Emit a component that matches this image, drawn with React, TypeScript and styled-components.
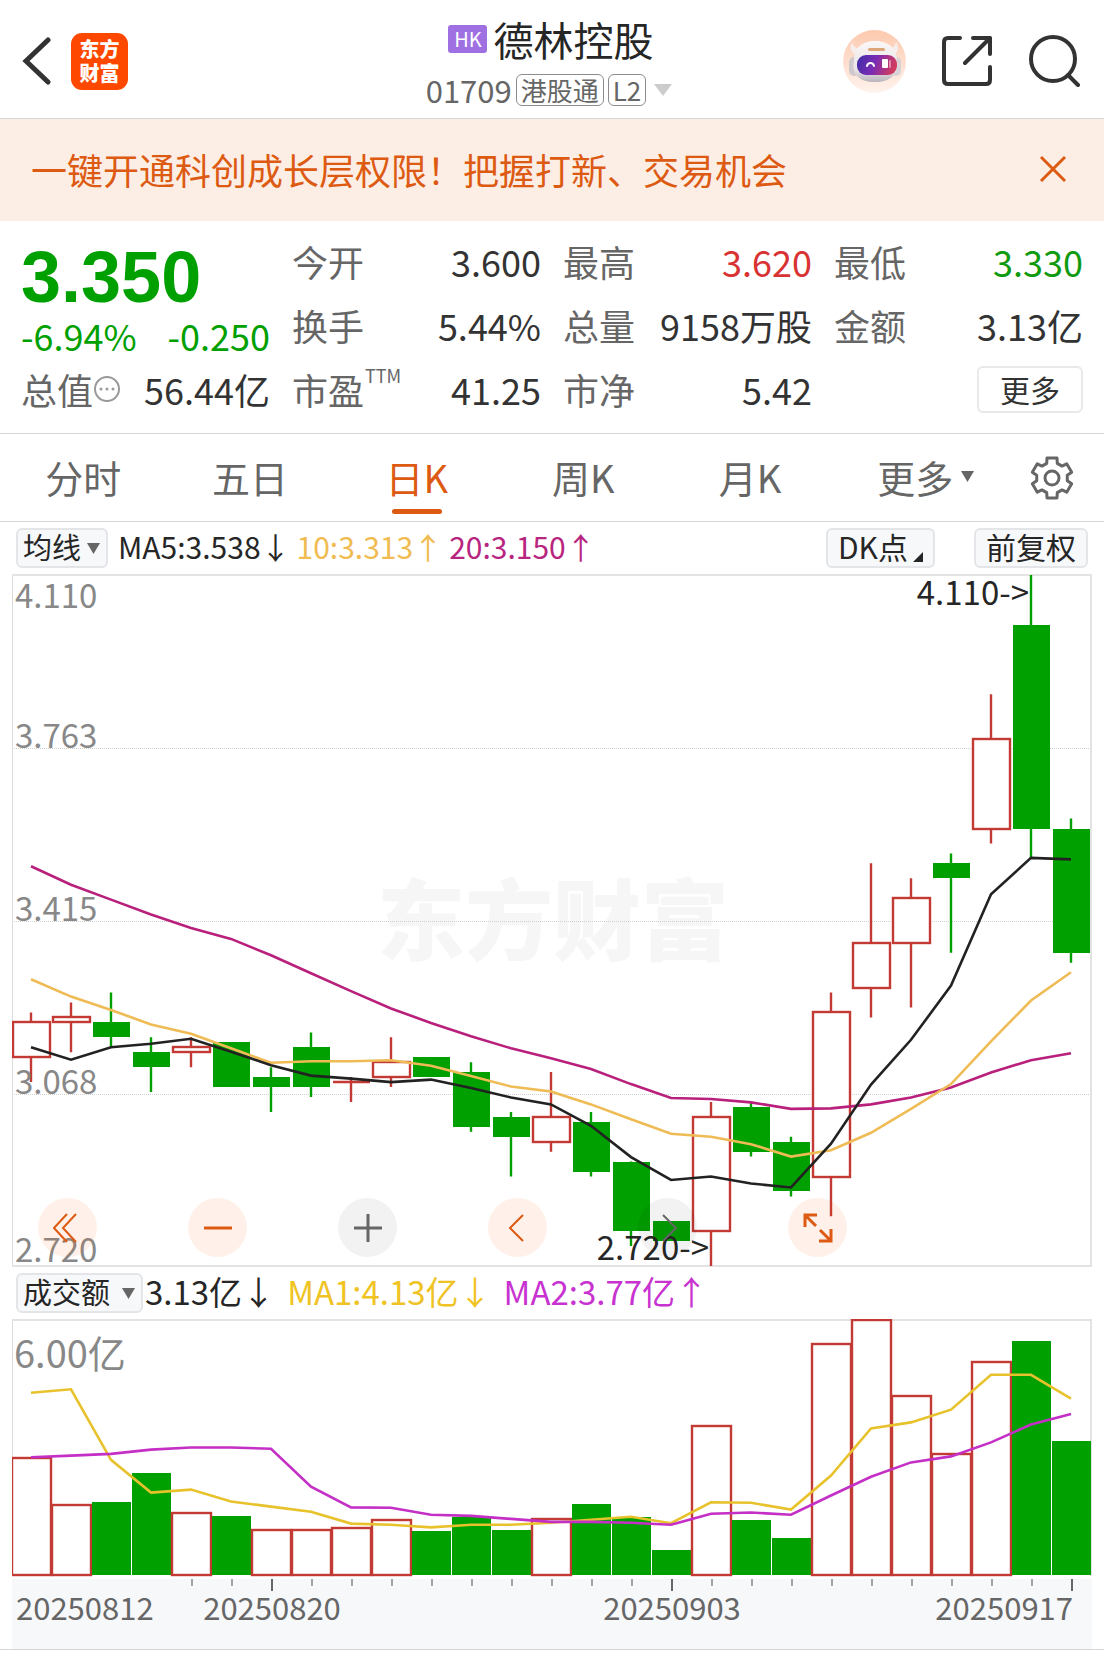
import React from "react";
import styled, { createGlobalStyle } from "styled-components";

const UP = "#c33a35";
const DOWN = "#00a000";
const ORANGE = "#dd5a12";
const INK = "#262626";

const GlobalStyle = createGlobalStyle`
  * { box-sizing: border-box; }
  body {
    margin: 0;
    background: #fff;
    color: ${INK};
    font-family: "Noto Sans CJK SC", "Noto Sans", sans-serif;
  }
  button, select {
    font-family: inherit;
    color: inherit;
    margin: 0;
    padding: 0;
    border: 0;
    background: none;
    cursor: pointer;
  }
  svg { display: block; }
  svg text { font-family: "Noto Sans CJK SC", "Noto Sans", sans-serif; }
`;

/* ---------- header ---------- */

const Header = styled.header`
  display: grid;
  grid-template-columns: 1fr auto 1fr;
  align-items: center;
  height: 119px;
  padding: 4px 24px 0 22px;
  border-bottom: 1px solid #d6d6d6;
`;

const HeaderSide = styled.div<{ $end?: boolean }>`
  display: flex;
  align-items: center;
  justify-content: ${(p) => (p.$end ? "flex-end" : "flex-start")};
  gap: ${(p) => (p.$end ? 36 : 20)}px;
`;

const Logo = styled.a`
  display: grid;
  place-content: center;
  width: 57px;
  height: 57px;
  border-radius: 11px;
  background: #fe4800;
  color: #fff;
  font-size: 20px;
  line-height: 24px;
  font-weight: 900;
  text-decoration: none;
`;

const Title = styled.div`
  display: flex;
  flex-direction: column;
  align-items: center;
  gap: 12px;
`;

const Name = styled.h1`
  display: flex;
  align-items: center;
  gap: 6px;
  margin: 0;
  font-size: 40px;
  line-height: 46px;
  font-weight: 400;
`;

const Market = styled.span`
  width: 39px;
  border-radius: 3px;
  background: #9e70e2;
  color: #fff;
  font-size: 20px;
  line-height: 28px;
  text-align: center;
`;

const Code = styled.div`
  display: flex;
  align-items: center;
  gap: 4px;
  color: #666;
  font-size: 31px;
  line-height: 32px;
`;

const Tag = styled.span`
  padding: 0 4px;
  border: 1px solid #8c8c8c;
  border-radius: 6px;
  font-size: 26px;
  line-height: 30px;
`;

const TitleMenu = styled.button`
  padding: 8px 4px;
`;

/* ---------- banner ---------- */

const Banner = styled.aside`
  display: flex;
  align-items: center;
  justify-content: space-between;
  height: 102px;
  padding: 0 36px 2px 31px;
  background: #fceee5;
  color: ${ORANGE};
  font-size: 36px;
`;

/* ---------- quote ---------- */

const Quote = styled.section`
  display: grid;
  grid-template-columns: repeat(4, 1fr);
  grid-template-rows: repeat(3, 64px);
  column-gap: 22px;
  padding: 8px 21px 12px;
  border-bottom: 1px solid #d6d6d6;
  font-size: 36px;
`;

const Last = styled.div`
  grid-row: span 2;
  color: ${DOWN};
`;

const Price = styled.div`
  padding-top: 12px;
  font-family: "Liberation Sans", "Noto Sans CJK SC", sans-serif;
  font-size: 72px;
  line-height: 72px;
  font-weight: 700;
`;

const Change = styled.div`
  display: flex;
  justify-content: space-between;
  line-height: 44px;
`;

const Stat = styled.div<{ $tone?: string }>`
  display: flex;
  align-items: center;
  justify-content: space-between;
  line-height: 64px;
  white-space: nowrap;
  color: ${(p) => p.$tone || "#333"};
`;

const StatLabel = styled.span`
  display: flex;
  align-items: center;
  gap: 1px;
  color: #666;
`;

const Ttm = styled.small`
  align-self: flex-start;
  font-size: 18px;
  line-height: 36px;
`;

const MoreButton = styled.button`
  width: 106px;
  height: 47px;
  margin-left: auto;
  border: 2px solid #e9e9eb;
  border-radius: 6px;
  font-size: 30px;
  line-height: 40px;
`;

/* ---------- tabs ---------- */

const Tabs = styled.nav`
  display: flex;
  height: 88px;
  border-bottom: 1px solid #d6d6d6;
`;

const TabList = styled.div`
  display: grid;
  grid-template-columns: repeat(6, 1fr);
  flex: 1;
`;

const Tab = styled.button<{ $active?: boolean; $menu?: boolean }>`
  position: relative;
  display: flex;
  align-items: center;
  justify-content: center;
  gap: 8px;
  padding: 0 0 3px ${(p) => (p.$menu ? 18 : 0)}px;
  color: ${(p) => (p.$active ? ORANGE : "#666")};
  font-size: 38px;

  &::after {
    content: "";
    display: ${(p) => (p.$active ? "block" : "none")};
    position: absolute;
    bottom: 7px;
    left: calc(50% - 25px);
    width: 50px;
    height: 5px;
    border-radius: 3px;
    background: ${ORANGE};
  }
`;

const SettingsButton = styled.button`
  display: grid;
  place-items: center;
  width: 104px;
`;

/* ---------- chart toolbars ---------- */

const Toolbar = styled.div`
  display: flex;
  align-items: center;
  justify-content: space-between;
  height: 52px;
  padding: 0 16px;
`;

const Legend = styled.div<{ $large?: boolean }>`
  display: flex;
  align-items: center;
  gap: ${(p) => (p.$large ? 12 : 6)}px;
  font-size: ${(p) => (p.$large ? 33 : 30)}px;
  white-space: nowrap;
`;

const LegendItem = styled.span<{ $color: string }>`
  padding-bottom: 4px;
  color: ${(p) => p.$color};
`;

const Picker = styled.label<{ $width: number; $gap: number }>`
  display: grid;
  align-items: center;
  width: ${(p) => p.$width}px;
  height: 40px;
  margin-right: ${(p) => p.$gap}px;
  border: 2px solid #e4e5e8;
  border-radius: 6px;
  background: #f7f8fa;

  select, svg { grid-area: 1 / 1; }
  select {
    height: 36px;
    padding: 0 0 4px 5px;
    appearance: none;
    font-size: 29px;
    line-height: 32px;
  }
  svg {
    justify-self: end;
    margin-right: 6px;
    pointer-events: none;
  }
`;

const ToolGroup = styled.div`
  display: flex;
  gap: 39px;
`;

const ToolButton = styled.button`
  display: flex;
  align-items: flex-start;
  gap: 5px;
  height: 40px;
  padding: 0 10px;
  border: 2px solid #e4e5e8;
  border-radius: 6px;
  background: #f7f8fa;
  font-size: 30px;
  line-height: 32px;

  svg {
    align-self: flex-end;
    margin-bottom: 4px;
  }
`;

/* ---------- charts ---------- */

const ChartBox = styled.div`
  position: relative;
  margin: 0 12px;

  > svg { width: 100%; height: auto; }
`;

const ChartControls = styled.div`
  position: absolute;
  left: 26px;
  bottom: 10px;
  display: flex;
  gap: 91px;
`;

const RoundButton = styled.button<{ $muted?: boolean }>`
  display: grid;
  place-items: center;
  width: 59px;
  height: 59px;
  border-radius: 50%;
  background: ${(p) => (p.$muted ? "rgba(0, 0, 0, 0.05)" : "rgba(255, 100, 10, 0.09)")};
  color: ${(p) => (p.$muted ? "#666" : ORANGE)};
`;

const BottomRule = styled.hr`
  margin: 0;
  border: 0;
  border-top: 1px solid #d6d6d6;
`;

/* ---------- data ---------- */

// [open, close, high, low]
const candles: number[][] = [
  [3.14, 3.21, 3.23, 3.09], [3.21, 3.22, 3.25, 3.15], [3.21, 3.18, 3.27, 3.16],
  [3.15, 3.12, 3.18, 3.07], [3.15, 3.16, 3.18, 3.12], [3.17, 3.08, 3.17, 3.08],
  [3.1, 3.08, 3.12, 3.03], [3.16, 3.08, 3.19, 3.06], [3.09, 3.09, 3.1, 3.05],
  [3.1, 3.13, 3.18, 3.08], [3.14, 3.1, 3.14, 3.1], [3.11, 3.0, 3.13, 2.99],
  [3.02, 2.98, 3.03, 2.9], [2.97, 3.02, 3.11, 2.95], [3.01, 2.91, 3.03, 2.9],
  [2.93, 2.79, 2.93, 2.76], [2.81, 2.77, 2.81, 2.77], [2.79, 3.02, 3.05, 2.72],
  [3.04, 2.95, 3.05, 2.94], [2.97, 2.87, 2.98, 2.86], [2.9, 3.23, 3.27, 2.82],
  [3.28, 3.37, 3.53, 3.22], [3.37, 3.46, 3.5, 3.24], [3.53, 3.5, 3.55, 3.35],
  [3.6, 3.78, 3.87, 3.57], [4.01, 3.6, 4.11, 3.54], [3.6, 3.35, 3.62, 3.33],
];

const ma5 = [3.16, 3.135, 3.16, 3.167, 3.177, 3.151, 3.124, 3.103, 3.097, 3.09, 3.095, 3.078, 3.059, 3.045, 3.002, 2.939, 2.893, 2.9, 2.886, 2.878, 2.966, 3.085, 3.175, 3.284, 3.468, 3.541, 3.538];
const ma10 = [3.297, 3.262, 3.235, 3.206, 3.187, 3.158, 3.129, 3.132, 3.132, 3.134, 3.123, 3.102, 3.081, 3.071, 3.045, 3.015, 2.986, 2.98, 2.965, 2.94, 2.953, 2.988, 3.036, 3.086, 3.172, 3.254, 3.311];
const ma20 = [3.524, 3.487, 3.457, 3.427, 3.4, 3.378, 3.345, 3.309, 3.273, 3.238, 3.209, 3.182, 3.158, 3.138, 3.116, 3.086, 3.058, 3.056, 3.049, 3.036, 3.037, 3.045, 3.059, 3.079, 3.109, 3.134, 3.148];

const volumes = [2.76, 1.65, 1.72, 2.41, 1.47, 1.4, 1.07, 1.05, 1.11, 1.3, 1.04, 1.37, 1.07, 1.32, 1.68, 1.37, 0.6, 3.51, 1.3, 0.88, 5.44, 6, 4.22, 2.85, 5.02, 5.51, 3.16];
const volumeUp = [0, 1, 4, 6, 7, 8, 9, 13, 17, 20, 21, 22, 23, 24];
const vma1 = [4.29, 4.37, 2.71, 1.94, 2.01, 1.73, 1.61, 1.49, 1.21, 1.18, 1.12, 1.18, 1.18, 1.23, 1.3, 1.37, 1.22, 1.71, 1.7, 1.54, 2.34, 3.45, 3.59, 3.89, 4.71, 4.71, 4.15];
const vma2 = [2.77, 2.81, 2.85, 2.95, 3, 3, 2.97, 2.08, 1.59, 1.58, 1.42, 1.39, 1.32, 1.25, 1.25, 1.23, 1.18, 1.44, 1.47, 1.42, 1.87, 2.31, 2.65, 2.79, 3.12, 3.54, 3.79];

const STEP = 40;
const cx = (i: number) => 19 + i * STEP;
const priceY = (p: number) => 1 + ((4.11 - p) / 1.39) * 691;
const volumeY = (v: number) => 256 - (v / 6) * 255;
const line = (values: number[], y: (v: number) => number) =>
  values.map((v, i) => `${cx(i)},${y(v).toFixed(1)}`).join(" ");

/* ---------- drawings ---------- */

const Triangle = ({ w, h, color }: { w: number; h: number; color: string }) => (
  <svg width={w} height={h} viewBox="0 0 10 10" preserveAspectRatio="none" aria-hidden="true">
    <path d="M0 0H10L5 10Z" fill={color} />
  </svg>
);

const Robot = () => (
  <svg width="63" height="63" viewBox="0 0 63 63" aria-hidden="true">
    <defs>
      <linearGradient id="halo" x1="0" y1="0" x2="0" y2="1">
        <stop offset="0" stopColor="#fdc9ae" />
        <stop offset="1" stopColor="#fff3ed" />
      </linearGradient>
      <linearGradient id="shell" x1="0" y1="0" x2="0" y2="1">
        <stop offset="0" stopColor="#fbf7f6" />
        <stop offset="0.7" stopColor="#e9e4e6" />
        <stop offset="1" stopColor="#b9b3bb" />
      </linearGradient>
      <linearGradient id="visor" x1="0" y1="0" x2="1" y2="0.2">
        <stop offset="0" stopColor="#3c2fa6" />
        <stop offset="0.5" stopColor="#7a2bb4" />
        <stop offset="1" stopColor="#cf3a60" />
      </linearGradient>
    </defs>
    <circle cx="31.5" cy="31.5" r="31.5" fill="url(#halo)" />
    <path d="M9 12C6 18 8 24 15 25L19 18C14 19 10 17 9 12Z" fill="#f6eeec" />
    <path d="M53 12C57 18 55 24 48 25L44 18C49 19 52 17 53 12Z" fill="#f6eeec" />
    <rect x="6" y="27" width="10" height="19" rx="5" fill="#cfc8cd" />
    <rect x="48" y="27" width="10" height="19" rx="5" fill="#d8d1d5" />
    <path d="M11 31C11 17 20 11 32 11S54 17 54 31C56 45 47 52 32 52S8 45 11 31Z" fill="url(#shell)" />
    <rect x="25" y="18" width="17" height="3" rx="1.5" fill="#dda578" />
    <rect x="14" y="25" width="40" height="20" rx="9" fill="url(#visor)" />
    <path d="M24 36C25 32 30 32 31 36" stroke="#fff" strokeWidth="2" fill="none" strokeLinecap="round" />
    <rect x="39" y="29" width="6" height="9" rx="1" fill="#fff" />
    <rect x="46" y="30" width="2" height="8" rx="1" fill="#e58aa5" />
  </svg>
);

const gearPath = (() => {
  const pts: string[] = [];
  for (let k = 0; k < 6; k++) {
    [[15.5, -20], [20.5, -14], [20.5, 14], [15.5, 20]].forEach(([r, d]) => {
      const a = ((k * 60 + d - 90) * Math.PI) / 180;
      pts.push(`${(22 + r * Math.cos(a)).toFixed(1)} ${(22 + r * Math.sin(a)).toFixed(1)}`);
    });
  }
  return `M${pts.join("L")}Z`;
})();

const Gear = () => (
  <svg width="44" height="44" viewBox="0 0 44 44" fill="none" stroke="#666" strokeWidth="3" strokeLinejoin="round" aria-hidden="true">
    <path d={gearPath} />
    <circle cx="22" cy="22" r="7" />
  </svg>
);

const Stroke = ({ d, size = 30, w = 2 }: { d: string; size?: number; w?: number }) => (
  <svg width={size} height={size} viewBox="0 0 30 30" fill="none" stroke="currentColor" strokeWidth={w} aria-hidden="true">
    <path d={d} />
  </svg>
);

const PriceChart = () => (
  <svg viewBox="0 0 1080 693" role="img" aria-label="日K线图">
    <text x="541" y="379" fontSize="88" fontWeight="900" fill="#f6f6f6" textAnchor="middle">东方财富</text>
    {[174, 347, 520].map((y) => (
      <line key={y} x1="0" x2="1079" y1={y} y2={y} stroke="#d0d0d0" strokeDasharray="1 1" shapeRendering="crispEdges" />
    ))}
    <path d="M0.5 0V692" stroke="#dcdcdc" />
    <path d="M0 1H1079V692H0" stroke="#e3e3e3" strokeWidth="2" fill="none" />
    {candles.map(([open, close, high, low], i) => {
      const up = close >= open;
      const top = Math.round(priceY(Math.max(open, close)));
      const bottom = Math.round(priceY(Math.min(open, close)));
      const color = up ? UP : DOWN;
      return (
        <g key={i} stroke={color} strokeWidth="2.4">
          <path d={`M${cx(i)} ${priceY(high).toFixed(1)}V${top}M${cx(i)} ${bottom}V${priceY(low).toFixed(1)}`} />
          {open === close ? (
            <path d={`M${cx(i) - 18} ${top}H${cx(i) + 19}`} />
          ) : up ? (
            <rect x={cx(i) - 18} y={top} width="37" height={bottom - top} fill="#fff" />
          ) : (
            <rect x={cx(i) - 18} y={top} width="37" height={bottom - top} fill={color} stroke="none" />
          )}
        </g>
      );
    })}
    <g fill="none" strokeWidth="2.6">
      <polyline points={line(ma20, priceY)} stroke="#b8207c" />
      <polyline points={line(ma10, priceY)} stroke="#efbb55" />
      <polyline points={line(ma5, priceY)} stroke="#222" />
    </g>
    <g fontSize="33" fill="#888">
      <text x="3" y="34">4.110</text>
      <text x="3" y="174">3.763</text>
      <text x="3" y="347">3.415</text>
      <text x="3" y="520">3.068</text>
      <text x="3" y="688">2.720</text>
    </g>
    <g fontSize="33" fill={INK} textAnchor="end">
      <text x="1017" y="31">4.110-&gt;</text>
      <text x="697" y="686">2.720-&gt;</text>
    </g>
  </svg>
);

const VolumeChart = () => (
  <svg viewBox="0 0 1080 330" role="img" aria-label="成交额图">
    <rect y="260" width="1080" height="70" fill="#f7f8fa" />
    <path d="M0.5 0V257" stroke="#dcdcdc" />
    <path d="M0 1H1079V257" stroke="#e3e3e3" strokeWidth="2" fill="none" />
    {volumes.map((v, i) => {
      const top = Math.round(volumeY(v));
      return volumeUp.includes(i) ? (
        <rect key={i} x={i * STEP} y={top} width="39" height={256 - top} fill="#fff" stroke={UP} strokeWidth="2.4" />
      ) : (
        <rect key={i} x={i * STEP} y={top} width="39" height={256 - top} fill={DOWN} />
      );
    })}
    <g fill="none" strokeWidth="2.6">
      <polyline points={line(vma1, volumeY)} stroke="#e8c22c" />
      <polyline points={line(vma2, volumeY)} stroke="#c42fc6" />
    </g>
    <text x="2" y="49" fontSize="38" fill="#888">6.00亿</text>
    {volumes.map((_, i) =>
      i < 4 ? null : i % 10 === 6 ? (
        <path key={i} d={`M${cx(i) + 1} 260v12`} stroke="#666" strokeWidth="2" />
      ) : (
        <path key={i} d={`M${cx(i) + 1} 260v7`} stroke="#888" strokeWidth="1.5" />
      )
    )}
    <g fontSize="31" fill="#666">
      <text x="4" y="301">20250812</text>
      <text x="260" y="301" textAnchor="middle">20250820</text>
      <text x="660" y="301" textAnchor="middle">20250903</text>
      <text x="1061" y="301" textAnchor="end">20250917</text>
    </g>
  </svg>
);

export default function App() {
  return (
    <>
      <GlobalStyle />
      <Header>
        <HeaderSide>
          <button aria-label="返回">
            <svg width="29" height="48" viewBox="0 0 29 48" fill="none" stroke="#333" strokeWidth="5" strokeLinecap="round" aria-hidden="true">
              <path d="M26 3L4 24L26 45" />
            </svg>
          </button>
          <Logo href="#home">
            <span>东方</span>
            <span>财富</span>
          </Logo>
        </HeaderSide>
        <Title>
          <Name>
            <Market>HK</Market>
            德林控股
          </Name>
          <Code>
            01709
            <Tag>港股通</Tag>
            <Tag>L2</Tag>
            <TitleMenu aria-label="切换股票">
              <Triangle w={18} h={12} color="#ccc" />
            </TitleMenu>
          </Code>
        </Title>
        <HeaderSide $end>
          <button aria-label="智能助手"><Robot /></button>
          <button aria-label="分享">
            <svg width="50" height="50" viewBox="0 0 50 50" fill="none" stroke="#333" strokeWidth="4" strokeLinecap="round" strokeLinejoin="round" aria-hidden="true">
              <path d="M18 2H6Q2 2 2 6V44Q2 48 6 48H44Q48 48 48 44V31M31 2H48V18M48 2L23 27" />
            </svg>
          </button>
          <button aria-label="搜索">
            <svg width="52" height="52" viewBox="0 0 52 52" fill="none" stroke="#333" strokeWidth="4" strokeLinecap="round" aria-hidden="true">
              <circle cx="25" cy="24" r="22" />
              <path d="M40 40L50 50" />
            </svg>
          </button>
        </HeaderSide>
      </Header>

      <Banner>
        一键开通科创成长层权限！把握打新、交易机会
        <button aria-label="关闭">
          <Stroke d="M3 3L27 27M27 3L3 27" w={3} />
        </button>
      </Banner>

      <Quote>
        <Last>
          <Price>3.350</Price>
          <Change>
            <span>-6.94%</span>
            <span>-0.250</span>
          </Change>
        </Last>
        <Stat><StatLabel>今开</StatLabel>3.600</Stat>
        <Stat $tone="#d93232"><StatLabel>最高</StatLabel>3.620</Stat>
        <Stat $tone="#109a10"><StatLabel>最低</StatLabel>3.330</Stat>
        <Stat><StatLabel>换手</StatLabel>5.44%</Stat>
        <Stat><StatLabel>总量</StatLabel>9158万股</Stat>
        <Stat><StatLabel>金额</StatLabel>3.13亿</Stat>
        <Stat>
          <StatLabel>
            总值
            <svg width="26" height="26" viewBox="0 0 26 26" fill="#999" aria-hidden="true">
              <circle cx="13" cy="13" r="12" fill="none" stroke="#999" strokeWidth="2" />
              <circle cx="7" cy="13" r="1.5" />
              <circle cx="13" cy="13" r="1.5" />
              <circle cx="19" cy="13" r="1.5" />
            </svg>
          </StatLabel>
          56.44亿
        </Stat>
        <Stat><StatLabel>市盈<Ttm>TTM</Ttm></StatLabel>41.25</Stat>
        <Stat><StatLabel>市净</StatLabel>5.42</Stat>
        <Stat><MoreButton>更多</MoreButton></Stat>
      </Quote>

      <Tabs>
        <TabList role="tablist">
          <Tab role="tab">分时</Tab>
          <Tab role="tab">五日</Tab>
          <Tab role="tab" aria-selected="true" $active>日K</Tab>
          <Tab role="tab">周K</Tab>
          <Tab role="tab">月K</Tab>
          <Tab role="tab" $menu>更多<Triangle w={13} h={11} color="#666" /></Tab>
        </TabList>
        <SettingsButton aria-label="设置"><Gear /></SettingsButton>
      </Tabs>

      <Toolbar>
        <Legend>
          <Picker $width={92} $gap={4}>
            <select aria-label="主图指标"><option>均线</option></select>
            <Triangle w={13} h={11} color="#666" />
          </Picker>
          <LegendItem $color={INK}>MA5:3.538↓</LegendItem>
          <LegendItem $color="#f0bc52">10:3.313↑</LegendItem>
          <LegendItem $color="#b8257f">20:3.150↑</LegendItem>
        </Legend>
        <ToolGroup>
          <ToolButton>
            DK点
            <svg width="10" height="10" viewBox="0 0 10 10" aria-hidden="true"><path d="M10 0V10H0Z" fill={INK} /></svg>
          </ToolButton>
          <ToolButton>前复权</ToolButton>
        </ToolGroup>
      </Toolbar>

      <ChartBox>
        <PriceChart />
        <ChartControls>
          <RoundButton aria-label="快速后退"><Stroke d="M14 1L1 15L14 29M23 1L10 15L23 29" /></RoundButton>
          <RoundButton aria-label="缩小"><Stroke d="M1 15H29" w={3} /></RoundButton>
          <RoundButton aria-label="放大" $muted><Stroke d="M1 15H29M15 1V29" w={3} /></RoundButton>
          <RoundButton aria-label="后退"><Stroke d="M20 2L7 15L20 28" /></RoundButton>
          <RoundButton aria-label="前进" $muted><Stroke d="M10 2L23 15L10 28" /></RoundButton>
          <RoundButton aria-label="全屏"><Stroke d="M2 14V2H14M2 2L13 13M28 16V28H16M28 28L17 17" w={3} /></RoundButton>
        </ChartControls>
      </ChartBox>

      <Toolbar>
        <Legend $large>
          <Picker $width={127} $gap={-10}>
            <select aria-label="副图指标"><option>成交额</option></select>
            <Triangle w={13} h={11} color="#666" />
          </Picker>
          <LegendItem $color={INK}>3.13亿↓</LegendItem>
          <LegendItem $color="#efc324">MA1:4.13亿↓</LegendItem>
          <LegendItem $color="#c832d0">MA2:3.77亿↑</LegendItem>
        </Legend>
      </Toolbar>

      <ChartBox>
        <VolumeChart />
      </ChartBox>
      <BottomRule />
    </>
  );
}
